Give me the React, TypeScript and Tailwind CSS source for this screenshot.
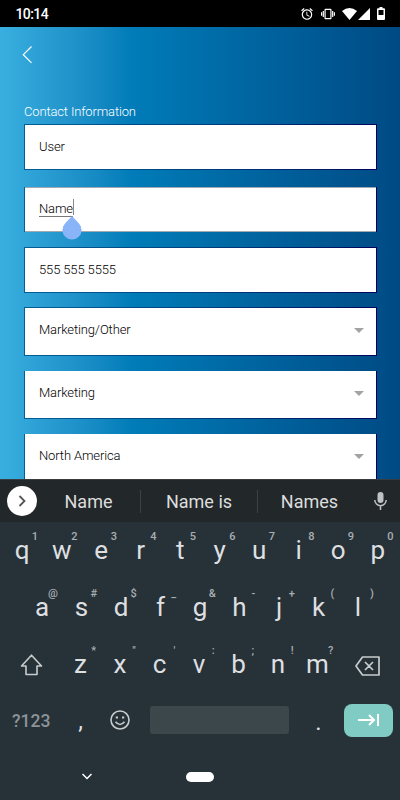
import { clsx } from "clsx";

interface Key {
  char: string;
  hint: string;
}

interface FieldProps {
  value: string;
  className: string;
  select?: boolean;
  active?: boolean;
}

function toKeys(chars: string, hints: string): Key[] {
  return chars.split("").map((char, i) => ({ char, hint: hints[i] }));
}

const topRow = toKeys("qwertyuiop", "1234567890");
const homeRow = toKeys("asdfghjkl", "@#$_&-+()");
const bottomRow = toKeys("zxcvbnm", "*\"':;!?");

function StatusBar() {
  return (
    <div className="flex h-[27px] items-center justify-between bg-black pl-[15.5px] pr-[15px] text-white">
      <span className="pt-px text-[14px] font-medium leading-none tracking-[-0.6px]">10:14</span>
      <div className="flex items-center">
        <svg width="14" height="14" viewBox="0 0 24 24" fill="currentColor">
          <path d="M22 5.720l-4.600-3.860-1.290 1.530 4.600 3.860L22 5.720zM7.880 3.390L6.600 1.860 2 5.710l1.290 1.530 4.590-3.850zM12.500 8H11v6l4.750 2.850.750-1.230-4-2.370V8zM12 4c-4.970 0-9 4.030-9 9s4.020 9 9 9a9 9 0 0 0 0-18zm0 16c-3.870 0-7-3.130-7-7s3.130-7 7-7 7 3.130 7 7-3.130 7-7 7z" />
        </svg>
        <svg className="ml-[7px]" width="14" height="14" viewBox="0 0 24 24" fill="currentColor">
          <path d="M0 15h2V9H0v6zm3 2h2V7H3v10zm19-8v6h2V9h-2zm-3 8h2V7h-2v10zM16.500 3h-9C6.670 3 6 3.670 6 4.500v15c0 .830.670 1.500 1.500 1.500h9c.830 0 1.500-.670 1.500-1.500v-15c0-.830-.670-1.500-1.500-1.500zM16 19H8V5h8v14z" />
        </svg>
        <svg className="ml-[7px]" width="15" height="12" viewBox="0 0 15 12" fill="currentColor">
          <path d="M0 3Q7.500-3 15 3L7.500 12z" />
        </svg>
        <svg className="ml-px" width="12" height="12" viewBox="0 0 12 12" fill="currentColor">
          <path d="M12 0v12H0z" />
        </svg>
        <svg className="ml-[7px]" width="8" height="13" viewBox="0 0 8 13" fill="currentColor">
          <path fillRule="evenodd" d="M2.500 0h3v1.200H7q1 0 1 1V12q0 1-1 1H1q-1 0-1-1V2.200q0-1 1-1h1.500zM1.500 3v5h5V3z" />
        </svg>
      </div>
    </div>
  );
}

function Field({ value, className, select, active }: FieldProps) {
  return (
    <div className={clsx("shrink-0 bg-linear-to-r from-[#005f96] via-[#003f7c] to-[#00005e] px-px", className)}>
      <div
        className={clsx(
          "flex h-full items-center justify-between bg-white pl-[14px] pr-3",
          select ? "pb-1" : "pb-0.5",
          active && "border-y border-[#a3a9b0]",
        )}
      >
        <span
          className={clsx(
            "relative text-[13px] font-light leading-[15px] tracking-[-0.13px] text-black",
            active && "border-b border-[#777]",
          )}
        >
          {value}
          {active && (
            <>
              <span className="absolute -right-px -top-0.5 h-4 w-px bg-[#888]" />
              <svg className="absolute -right-[9px] top-[15px]" width="20" height="24" viewBox="0 0 20 24">
                <path d="M10 0l6.800 7.200a9.600 9.600 0 1 1-13.600 0z" fill="#8ab4f8" />
              </svg>
            </>
          )}
        </span>
        {select && <span className="mt-0.5 border-x-[5px] border-t-[5px] border-x-transparent border-t-[#a3a3a3]" />}
      </div>
    </div>
  );
}

function KeyCap({ char, hint }: Key) {
  return (
    <div className="relative flex h-full w-[39.5px] items-center justify-center pb-0.5 text-[26px] leading-none text-[#dedfe0]">
      {char}
      <span className="absolute right-1 top-[9px] text-right text-[11px] font-medium leading-3 text-[#a9aeb1]">
        {hint}
      </span>
    </div>
  );
}

function Suggestions() {
  return (
    <div className="flex h-[42px] items-center bg-[#22272a] pl-[7px] pr-[13px] text-[18px] text-[#dcdddd]">
      <div className="flex size-[30px] items-center justify-center rounded-full bg-white">
        <svg width="8" height="12" viewBox="0 0 8 12" fill="none" stroke="#555" strokeWidth="1.800">
          <path d="M1.500 1l5 5-5 5" />
        </svg>
      </div>
      <span className="w-[103px] text-center">Name</span>
      <span className="h-[23px] w-px bg-[#3b4144]" />
      <span className="w-[116px] text-center">Name is</span>
      <span className="h-[23px] w-px bg-[#3b4144]" />
      <span className="w-[103px] text-center">Names</span>
      <svg className="ml-auto" width="13" height="18" viewBox="0 0 13 18" fill="none" stroke="#bfc1c2" strokeWidth="1.500">
        <rect x="3.500" y="0" width="6" height="11" rx="3" fill="#bfc1c2" stroke="none" />
        <path d="M.8 8a5.700 5.700 0 0 0 11.400 0M6.500 13.500V18" />
      </svg>
    </div>
  );
}

function Keyboard() {
  return (
    <div className="flex h-[321px] flex-col border-t border-[#3a3d3f] bg-[#263238]">
      <Suggestions />
      <div className="flex h-[57px] justify-center">
        {topRow.map((key) => (
          <KeyCap key={key.char} {...key} />
        ))}
      </div>
      <div className="flex h-[57px] justify-center">
        {homeRow.map((key) => (
          <KeyCap key={key.char} {...key} />
        ))}
      </div>
      <div className="flex h-[57px] items-center justify-between pl-5 pr-5">
        <svg width="23" height="22" viewBox="0 0 23 22" fill="none" stroke="#c9cccd" strokeWidth="1.600" strokeLinejoin="round">
          <path d="M11.500 1.200L21.500 12H17v8.500H6V12H1.500z" />
        </svg>
        <div className="flex h-full">
          {bottomRow.map((key) => (
            <KeyCap key={key.char} {...key} />
          ))}
        </div>
        <svg className="mt-0.5" width="25" height="20" viewBox="0 0 25 20" fill="none" stroke="#c9cccd" strokeWidth="1.700" strokeLinejoin="round">
          <path d="M7.500 1H24v18H7.500L1 10zM10 6l8 8m0-8l-8 8" />
        </svg>
      </div>
      <div className="flex h-[57px] items-center pb-[3px] pl-3 pr-[7px] text-[#dedfe0]">
        <span className="w-[39px] whitespace-nowrap pt-1 text-[17.500px] font-medium leading-none text-[#8d9498]">
          ?123
        </span>
        <span className="w-[59px] pt-0.5 text-center text-[24px] leading-none">,</span>
        <svg width="20" height="20" viewBox="0 0 20 20" fill="none" stroke="#c9cccd" strokeWidth="1.600">
          <circle cx="10" cy="10" r="9" />
          <path d="M5.500 11.800q4.500 5.400 9 0" />
          <path d="M5.800 7.500h2.200M12 7.500h2.200" strokeWidth="2.200" />
        </svg>
        <span className="ml-5 h-7 w-[139px] rounded-[3px] bg-[#3c474c]" />
        <span className="w-[55px] pl-1 pt-1 text-center text-[24px] leading-none">.</span>
        <div className="flex h-[33px] w-[49px] items-center justify-center rounded-lg bg-[#80cbc4]">
          <svg width="21" height="12" viewBox="0 0 21 12" fill="none" stroke="#fff" strokeWidth="2">
            <path d="M0 6h16M11 1l5 5-5 5M20 0v12" />
          </svg>
        </div>
      </div>
      <div className="flex grow items-center pl-[82px] pt-[3px]">
        <svg width="10" height="7" viewBox="0 0 10 7" fill="none" stroke="#fff" strokeWidth="1.500">
          <path d="M.5 1L5 5.500 9.500 1" />
        </svg>
        <span className="ml-[94px] h-[10px] w-7 rounded-full bg-white" />
      </div>
    </div>
  );
}

export default function App() {
  return (
    <div className="flex h-[800px] w-[400px] flex-col overflow-hidden font-['Roboto',sans-serif]">
      <StatusBar />
      <div className="flex h-[452px] flex-col overflow-hidden bg-linear-to-r from-[#39afe0] via-[#007cb8] via-33% to-[#004a84] pl-6 pr-[23px] pt-[19px]">
        <svg className="-ml-1 shrink-0" width="12" height="18" viewBox="0 0 12 18" fill="none" stroke="#fff" strokeWidth="1.200">
          <path d="M11.500.5L3.300 8.700l8.200 8.200" />
        </svg>
        <h1 className="mt-[40px] shrink-0 text-[13px] font-light leading-4 tracking-[-0.15px] text-white">
          Contact Information
        </h1>
        <Field value="User" className="mt-1 h-[46px] py-px" />
        <Field value="Name" className="mt-[17px] h-[45px]" active />
        <Field value="555 555 5555" className="mt-[15px] h-[46px] py-px" />
        <Field value="Marketing/Other" className="mt-[14px] h-[49px] py-px" select />
        <Field value="Marketing" className="mt-[15px] h-12 pb-px" select />
        <Field value="North America" className="mt-[15px] h-12 pb-px" select />
      </div>
      <Keyboard />
    </div>
  );
}
